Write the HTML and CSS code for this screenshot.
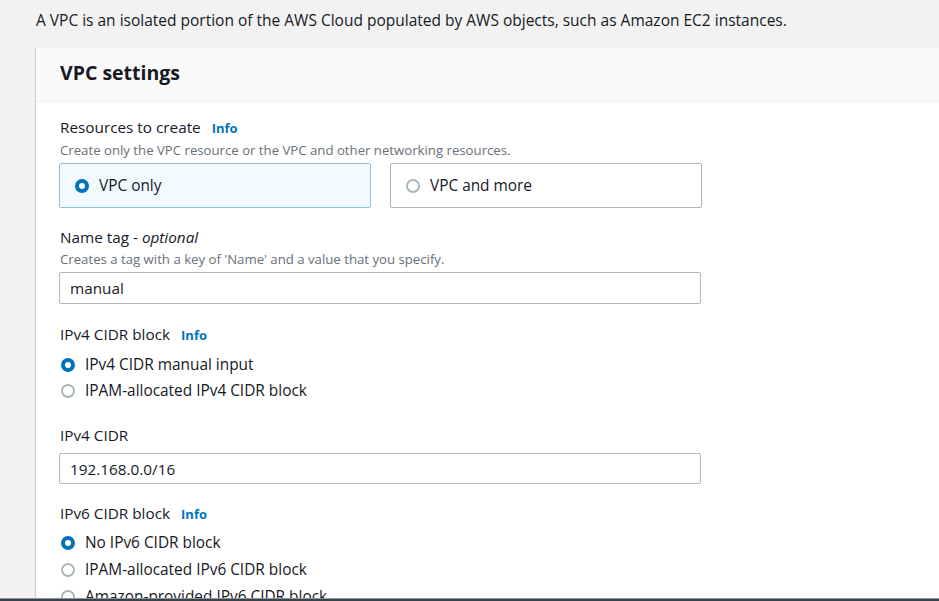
FILE: index.html
```html
<!DOCTYPE html>
<html>
<head>
<meta charset="utf-8">
<link rel="stylesheet" href="styles.css">
</head>
<body>
<div class="page">
  <p class="intro">A VPC is an isolated portion of the AWS Cloud populated by AWS objects, such as Amazon EC2 instances.</p>
  <div class="card">
    <div class="card-header"><h2>VPC settings</h2></div>
    <div class="card-body">
      <div class="field">
        <div class="label">Resources to create <span class="info">Info</span></div>
        <div class="desc">Create only the VPC resource or the VPC and other networking resources.</div>
        <div class="tiles">
          <div class="tile selected"><span class="radio on"></span><span>VPC only</span></div>
          <div class="tile"><span class="radio"></span><span>VPC and more</span></div>
        </div>
      </div>
      <div class="field f-name">
        <div class="label">Name tag - <em>optional</em></div>
        <div class="desc">Creates a tag with a key of 'Name' and a value that you specify.</div>
        <div class="input">manual</div>
      </div>
      <div class="field f-ipv4">
        <div class="label">IPv4 CIDR block <span class="info">Info</span></div>
        <div class="radios">
          <div class="opt"><span class="radio on"></span><span>IPv4 CIDR manual input</span></div>
          <div class="opt"><span class="radio"></span><span>IPAM-allocated IPv4 CIDR block</span></div>
        </div>
      </div>
      <div class="field f-cidr">
        <div class="label">IPv4 CIDR</div>
        <div class="input spaced">192.168.0.0/16</div>
      </div>
      <div class="field f-ipv6">
        <div class="label">IPv6 CIDR block <span class="info">Info</span></div>
        <div class="radios r6">
          <div class="opt"><span class="radio on"></span><span>No IPv6 CIDR block</span></div>
          <div class="opt"><span class="radio"></span><span>IPAM-allocated IPv6 CIDR block</span></div>
          <div class="opt"><span class="radio"></span><span>Amazon-provided IPv6 CIDR block</span></div>
        </div>
      </div>
    </div>
  </div>
</div>
<div class="bottom-bar"></div>
</body>
</html>
```

FILE: styles.css
```css
* { box-sizing: border-box; }
html, body { margin: 0; padding: 0; }
body {
  background: #f2f2f2;
  font-family: "Open Sans", "Noto Sans", sans-serif;
  color: #16191f;
  width: 939px;
  height: 601px;
  overflow: hidden;
}
.page {
  height: 598px;
  overflow: hidden;
  padding-left: 36px;
}
.intro {
  margin: 0;
  padding-top: 10px;
  height: 48px;
  font-size: 15.5px;
  line-height: 20px;
}
.card {
  background: #fff;
  box-shadow: -1px 0 1px rgba(0,0,0,0.12), 0 1px 1px rgba(0,0,0,0.1);
  min-height: 600px;
}
.card-header {
  background: #fafafa;
  height: 54px;
  border-bottom: 1px solid #f0f0f0;
  padding: 13px 24px 0 24px;
}
.card-header h2 {
  margin: 0;
  font-size: 19.5px;
  font-weight: 700;
  line-height: 24px;
  color: #16191f;
}
.card-body {
  padding: 15px 24px 0 24px;
}
.field { width: 642px; }
.label {
  font-size: 15.3px;
  line-height: 20px;
  color: #16191f;
  white-space: nowrap;
}
.label em { font-style: italic; }
.info {
  color: #0073bb;
  font-weight: 700;
  font-size: 13px;
  margin-left: 7px;
}
.desc {
  font-size: 13.2px;
  line-height: 16px;
  color: #687078;
  margin-top: 4px;
  white-space: nowrap;
}
.tiles {
  display: flex;
  gap: 19px;
  margin-top: 5px;
  margin-left: -1px;
}
.tile {
  width: 312px;
  height: 45px;
  border: 1px solid #aab7b8;
  border-radius: 2px;
  display: flex;
  align-items: center;
  gap: 10px;
  padding-left: 15px;
  font-size: 15.4px;
}
.tile.selected {
  background: #f1faff;
  border-color: #8ec3e3;
}
.radio {
  width: 14px;
  height: 14px;
  border-radius: 50%;
  border: 2px solid #aab7b8;
  background: #fff;
  flex: none;
}
.radio.on {
  border: 4px solid #0073bb;
}
.f-name { margin-top: 19px; }
.input {
  margin-top: 5px;
  margin-left: -1px;
  width: 642px;
  height: 32px;
  border: 1px solid #aab7b8;
  border-radius: 2px;
  padding-left: 10px;
  display: flex;
  align-items: center;
  font-size: 15.3px;
  color: #16191f;
}
.input.spaced { margin-top: 8px; height: 31px; }
.f-ipv4 { margin-top: 20px; }
.radios {
  margin-top: 10px;
  display: flex;
  flex-direction: column;
  gap: 6px;
}
.radios.r6 { margin-top: 9px; gap: 7px; }
.opt {
  display: flex;
  align-items: center;
  gap: 10px;
  font-size: 15.4px;
  line-height: 20px;
  margin-left: 1px;
  white-space: nowrap;
}
.f-cidr { margin-top: 24px; }
.f-ipv6 { margin-top: 19px; }
.bottom-bar {
  height: 3px;
  background: #3b4149;
  border-top: 1px solid #8a959e;
}
```
